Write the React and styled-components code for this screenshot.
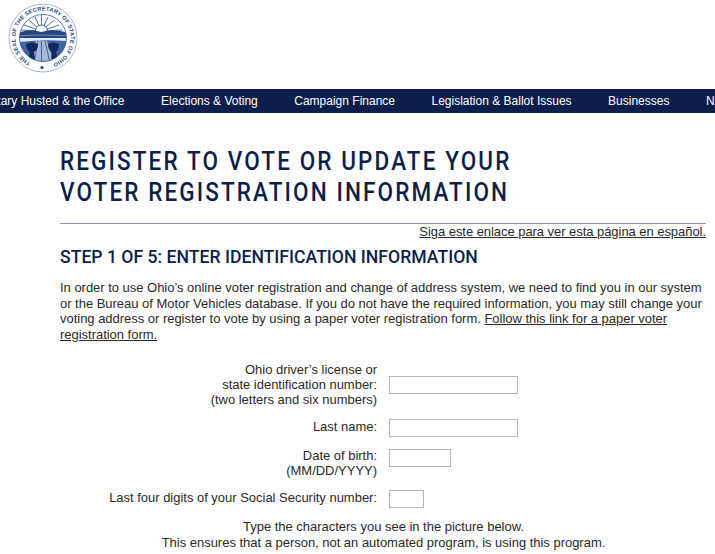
import styled, { createGlobalStyle } from "styled-components";

const GlobalStyle = createGlobalStyle`
   html, body {
      margin: 0;
      padding: 0;
      background: #fff;
      overflow: hidden;
   }
   body {
      font-family: "Liberation Sans", Arial, sans-serif;
      color: #2a2a2a;
   }
`;

const Page = styled.div`
   width: 715px;
   height: 554px;
   overflow: hidden;
`;

const Header = styled.header`
   height: 89px;
   padding: 3px 0 0 8px;
   box-sizing: border-box;

   svg {
      display: block;
   }
`;

const Nav = styled.nav`
   height: 24px;
   background: #0c1f4a;
   display: flex;
   align-items: center;
   gap: 36.5px;
   overflow: hidden;
   white-space: nowrap;
`;

const NavItem = styled.a`
   flex: none;
   color: #fff;
   font-size: 12px;
   margin-left: ${({ $offset }) => $offset || 0}px;
`;

const Main = styled.main`
   padding: 34px 9px 0 60px;
`;

const Title = styled.h1`
   margin: 0;
   font-family: Roboto, sans-serif;
   font-weight: 500;
   font-size: 25px;
   line-height: 30.5px;
   letter-spacing: 2.35px;
   white-space: nowrap;
   color: #0c1f4a;
   transform: scaleX(0.9);
   transform-origin: left center;
`;

const Rule = styled.div`
   margin-top: 15px;
   height: 1px;
   background: #8a93a8;
`;

const SpanishLink = styled.a`
   display: block;
   text-align: right;
   font-size: 13px;
   line-height: 15px;
   letter-spacing: -0.05px;
   color: #2a2a2a;
   text-decoration: underline;
`;

const StepTitle = styled.h2`
   margin: 6px 0 0;
   font-family: Roboto, sans-serif;
   font-weight: 500;
   font-size: 19px;
   line-height: 24px;
   white-space: nowrap;
   color: #0c1f4a;
   transform: scaleX(0.927);
   transform-origin: left center;
`;

const Intro = styled.p`
   margin: 11px -9px 0 0;
   font-size: 13px;
   line-height: 15.5px;
   letter-spacing: -0.025px;

   a {
      color: inherit;
      text-decoration: underline;
   }
`;

const Form = styled.form`
   margin: 20px 0 0 -60px;
   display: grid;
   grid-template-columns: 377px 1fr;
   column-gap: 12px;
   row-gap: 11.5px;
   align-items: start;
`;

const Label = styled.label`
   text-align: right;
   font-size: 13px;
   line-height: 15px;
   letter-spacing: -0.02px;
`;

const Field = styled.input`
   display: block;
   box-sizing: border-box;
   width: ${({ $w }) => $w}px;
   height: 18px;
   margin-top: ${({ $top }) => $top || 0}px;
   padding: 0;
   background: #fff;
   border: 1px solid #b5b5b5;
   border-radius: 0;
`;

const Note = styled.p`
   margin: 11px 0 0 -60px;
   width: 767px;
   text-align: center;
   font-size: 13px;
   line-height: 16px;
   letter-spacing: -0.02px;
`;

const Seal = () => (
   <svg width="70" height="70" viewBox="0 0 70 70">
      <defs>
         <path id="sealRing" d="M 35 62.5 A 27.5 27.5 0 1 1 35.01 62.5" />
         <clipPath id="sealInner">
            <circle cx="35" cy="35" r="23.5" />
         </clipPath>
      </defs>
      <circle cx="35" cy="35" r="34" fill="#fff" stroke="#a9b6cf" strokeWidth="1" />
      <text fontFamily="Liberation Sans, sans-serif" fontSize="5.6" fontWeight="700" letterSpacing="0.25" fill="#23457f">
         <textPath href="#sealRing" startOffset="13">
            THE SEAL OF THE SECRETARY OF STATE OF OHIO
         </textPath>
      </text>
      <g clipPath="url(#sealInner)">
         <rect x="10" y="10" width="50" height="50" fill="#fff" />
         <path
            d="M33.5 28 L33.5 12M33.5 28 L27 14M33.5 28 L40 14M33.5 28 L21 17M33.5 28 L46 17M33.5 28 L16 22M33.5 28 L51 22M33.5 28 L13 27M33.5 28 L54 27"
            stroke="#4f70a8"
            strokeWidth="1"
         />
         <circle cx="33.5" cy="28" r="6" fill="#fff" stroke="#23457f" strokeWidth="0.8" />
         <path d="M10 30 Q22 25 33 29 Q46 25 60 30 L60 35 L10 35 Z" fill="#23457f" />
         <path d="M10 33 Q30 31 60 33" fill="none" stroke="#8ea4c9" strokeWidth="0.8" />
         <path d="M10 35 H60 V38 Q35 36 10 39 Z" fill="#e4eaf3" />
         <path d="M10 39 Q35 36 60 38 V60 H10 Z" fill="#3f66a6" />
         <path d="M28 38 L39 38 L46 60 L22 60 Z" fill="#a9b9d4" />
         <path d="M30 38 L26 60M33.5 38 V60M37 38 L42 60" stroke="#3f66a6" strokeWidth="1" />
         <path d="M18 41 Q24 38 30 41 Q30 47 26 49 L27 56 L20 56 L22 49 Q18 46 18 41 Z" fill="#12295c" />
         <path d="M40 41 Q46 38 51 41 Q51 46 48 49 L50 56 L43 56 L44 49 Q40 47 40 41 Z" fill="#12295c" />
      </g>
      <circle cx="35" cy="35" r="23.5" fill="none" stroke="#23457f" strokeWidth="0.7" />
      <circle cx="34" cy="64.5" r="1.6" fill="#23457f" />
   </svg>
);

const App = () => {
   return (
      <Page>
         <GlobalStyle />
         <Header>
            <Seal />
         </Header>
         <Nav>
            <NavItem $offset={-34}>Secretary Husted &amp; the Office</NavItem>
            <NavItem>Elections &amp; Voting</NavItem>
            <NavItem>Campaign Finance</NavItem>
            <NavItem>Legislation &amp; Ballot Issues</NavItem>
            <NavItem>Businesses</NavItem>
            <NavItem>News</NavItem>
         </Nav>
         <Main>
            <Title>
               REGISTER TO VOTE OR UPDATE YOUR
               <br />
               VOTER REGISTRATION INFORMATION
            </Title>
            <Rule />
            <SpanishLink>Siga este enlace para ver esta página en español.</SpanishLink>
            <StepTitle>STEP 1 OF 5: ENTER IDENTIFICATION INFORMATION</StepTitle>
            <Intro>
               In order to use Ohio’s online voter registration and change of address system, we need to find you in our system
               or the Bureau of Motor Vehicles database. If you do not have the required information, you may still change your
               voting address or register to vote by using a paper voter registration form. <a>Follow this link for a paper voter registration form.</a>
            </Intro>
            <Form>
               <Label>
                  Ohio driver’s license or
                  <br />
                  state identification number:
                  <br />
                  (two letters and six numbers)
               </Label>
               <Field $w={129} $top={14} />
               <Label>Last name:</Label>
               <Field $w={129} />
               <Label>
                  Date of birth:
                  <br />
                  (MM/DD/YYYY)
               </Label>
               <Field $w={62} $top={1} />
               <Label>Last four digits of your Social Security number:</Label>
               <Field $w={35} />
            </Form>
            <Note>
               Type the characters you see in the picture below.
               <br />
               This ensures that a person, not an automated program, is using this program.
            </Note>
         </Main>
      </Page>
   );
};

export default App;
